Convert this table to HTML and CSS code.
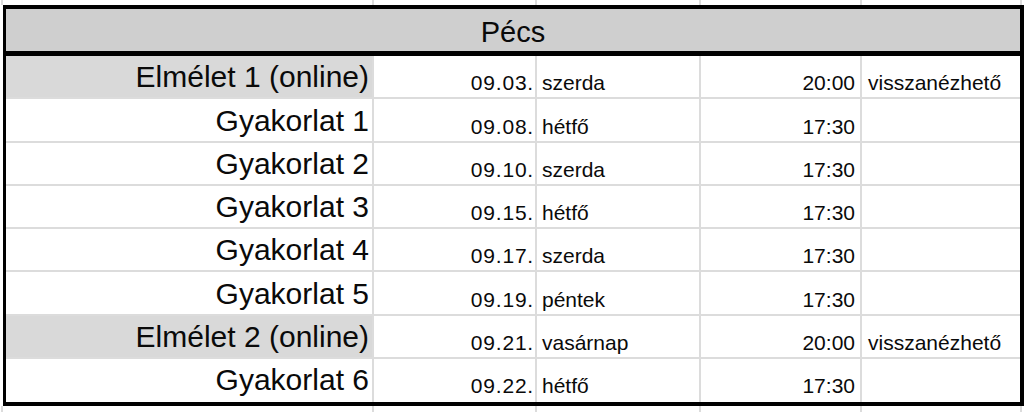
FILE: index.html
```html
<!DOCTYPE html>
<html lang="hu">
<head>
<meta charset="utf-8">
<title>Pécs</title>
<link rel="stylesheet" href="styles.css">
</head>
<body>
<div class="strip strip-top">
  <div></div><div></div><div></div><div></div><div></div><div></div>
</div>
<div class="table">
  <div class="header">Pécs</div>
  <div class="rows">
    <div class="c name gray">Elmélet 1 (online)</div><div class="c date">09.03.</div><div class="c day">szerda</div><div class="c time">20:00</div><div class="c note">visszanézhető</div>
    <div class="c name">Gyakorlat 1</div><div class="c date">09.08.</div><div class="c day">hétfő</div><div class="c time">17:30</div><div class="c note"></div>
    <div class="c name">Gyakorlat 2</div><div class="c date">09.10.</div><div class="c day">szerda</div><div class="c time">17:30</div><div class="c note"></div>
    <div class="c name">Gyakorlat 3</div><div class="c date">09.15.</div><div class="c day">hétfő</div><div class="c time">17:30</div><div class="c note"></div>
    <div class="c name">Gyakorlat 4</div><div class="c date">09.17.</div><div class="c day">szerda</div><div class="c time">17:30</div><div class="c note"></div>
    <div class="c name">Gyakorlat 5</div><div class="c date">09.19.</div><div class="c day">péntek</div><div class="c time">17:30</div><div class="c note"></div>
    <div class="c name gray">Elmélet 2 (online)</div><div class="c date">09.21.</div><div class="c day">vasárnap</div><div class="c time">20:00</div><div class="c note">visszanézhető</div>
    <div class="c name last">Gyakorlat 6</div><div class="c date last">09.22.</div><div class="c day last">hétfő</div><div class="c time last">17:30</div><div class="c note last"></div>
  </div>
</div>
<div class="strip strip-bottom">
  <div></div><div></div><div></div><div></div><div></div><div></div>
</div>
</body>
</html>
```
FILE: styles.css
```css
* { box-sizing: border-box; }
html, body {
  margin: 0;
  padding: 0;
  background: #ffffff;
  width: 1024px;
  height: 412px;
  overflow: hidden;
  font-family: "Liberation Sans", Arial, Helvetica, sans-serif;
  color: #0a0a0a;
}

.strip {
  display: grid;
  grid-template-columns: 371px 163px 164px 161px 160px 1fr;
  margin-left: 1px;
}
.strip > div { border-left: 2px solid #dcdcdc; }
.strip-top { height: 5px; }
.strip-bottom { height: 6px; }

.table {
  margin-left: 3px;
  border-top: 4px solid #000;
  border-left: 3px solid #000;
  border-right: 4px solid #000;
  border-bottom: 4px solid #000;
}

.header {
  height: 47px;
  background: #cfcfcf;
  border-bottom: 5px solid #000;
  display: flex;
  align-items: flex-end;
  justify-content: center;
  font-size: 29px;
  line-height: 1;
  padding-bottom: 4px;
}

.rows {
  display: grid;
  grid-template-columns: 368px 163px 164px 161px 1fr;
  grid-auto-rows: 43.25px;
}

.c {
  display: flex;
  align-items: flex-end;
  border-right: 2px solid #dcdcdc;
  border-bottom: 2px solid #dcdcdc;
  line-height: 1;
  white-space: nowrap;
  font-size: 21px;
  padding-bottom: 4px;
}
.c.last { border-bottom: 0; }
.c.note { border-right: 0; }

.name {
  justify-content: flex-end;
  font-size: 30px;
  padding-right: 3px;
  padding-bottom: 5px;
}
.gray { background: #d9d9d9; }
.date {
  justify-content: flex-end;
  padding-right: 1px;
  letter-spacing: 0.8px;
}
.day { padding-left: 5px; }
.time { justify-content: flex-end; padding-right: 5px; }
.note { padding-left: 6px; }
.c.last { padding-bottom: 6px; }
.c.name.last { padding-bottom: 7px; }
```
